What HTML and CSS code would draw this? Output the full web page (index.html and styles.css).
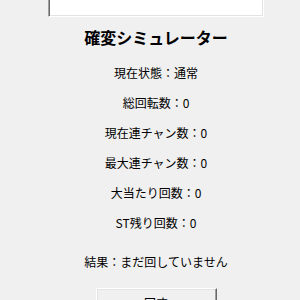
FILE: index.html
```html
<!DOCTYPE html>
<html lang="ja">
  <head>
    <meta charset="UTF-8" />
    <meta name="viewport" content="width=device-width, initial-scale=1.0" />
    <title>確変シミュレーター</title>
    <link rel="stylesheet" href="styles.css">
  </head>
  <body>
    <div class="app">
      <div class="screen"></div>
      <h1 class="title">確変シミュレーター</h1>
      <div class="stats">
        <div class="stat">現在状態：通常</div>
        <div class="stat">総回転数：0</div>
        <div class="stat">現在連チャン数：0</div>
        <div class="stat">最大連チャン数：0</div>
        <div class="stat">大当たり回数：0</div>
        <div class="stat">ST残り回数：0</div>
      </div>
      <div class="result">結果：まだ回していません</div>
      <button class="spin-btn">回す</button>
    </div>
  </body>
</html>
```
FILE: styles.css
```css
html,
body {
  margin: 0;
  padding: 0;
  background: #f0f0f0;
  overflow: hidden;
}

body {
  font-family: "Noto Sans CJK JP", "Noto Sans", sans-serif;
  color: #000;
}

.app {
  width: 288px;
  padding-left: 12px;
  display: flex;
  flex-direction: column;
  align-items: center;
}

/* top display box, scrolled partly out of view */
.screen {
  width: 216px;
  height: 17px;
  box-sizing: border-box;
  background: #fff;
  border-left: 1px solid #a0a0a0;
  border-right: 1px solid #fff;
  border-bottom: 1px solid #fff;
  box-shadow: inset 1px 0 #696969, inset -1px -1px #e3e3e3;
}

.title {
  margin: 9px 0 0;
  font-size: 16px;
  font-weight: bold;
  line-height: 22px;
}

.stats {
  margin-top: 10px;
  display: flex;
  flex-direction: column;
  align-items: center;
}

.stat {
  font-size: 12px;
  line-height: 30px;
}

.result {
  margin-top: 9px;
  font-size: 12px;
  line-height: 30px;
}

.spin-btn {
  margin-top: 11px;
  width: 121px;
  height: 30px;
  padding: 0;
  font-family: inherit;
  font-size: 12px;
  line-height: 28px;
  color: #000;
  background: #f0f0f0;
  border: 1px solid;
  border-color: #fff #696969 #696969 #fff;
  box-shadow: inset -1px -1px #a0a0a0, inset 1px 1px #e3e3e3;
}
```
